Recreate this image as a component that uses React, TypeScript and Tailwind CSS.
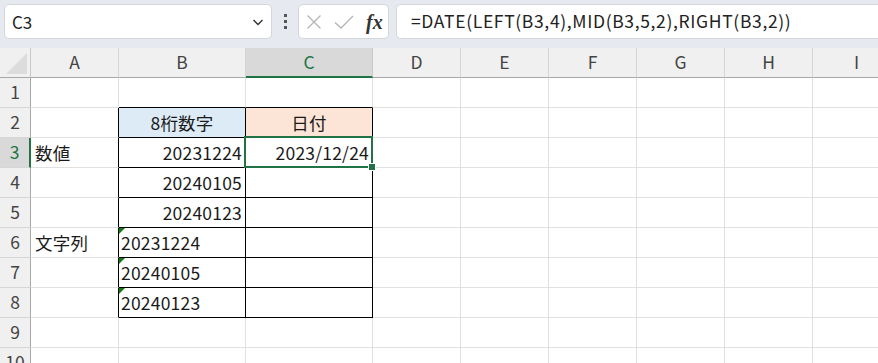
import React from "react";

const FONT = { fontFamily: '"Noto Sans CJK JP", "Noto Sans", sans-serif' };

const COLS = ["A", "B", "C", "D", "E", "F", "G", "H", "I"];

type CellDef = { text?: string; align?: "left" | "right" | "center"; tri?: boolean };

const data: Record<string, CellDef> = {
  B2: { text: "8桁数字", align: "center" },
  C2: { text: "日付", align: "center" },
  A3: { text: "数値", align: "left" },
  B3: { text: "20231224", align: "right" },
  C3: { text: "2023/12/24", align: "right" },
  B4: { text: "20240105", align: "right" },
  B5: { text: "20240123", align: "right" },
  A6: { text: "文字列", align: "left" },
  B6: { text: "20231224", align: "left", tri: true },
  B7: { text: "20240105", align: "left", tri: true },
  B8: { text: "20240123", align: "left", tri: true },
};

function cellClass(col: string, row: number): string {
  const inTable = (col === "B" || col === "C") && row >= 2 && row <= 8;
  let cls = "relative flex items-center h-[30px] border-r border-b ";
  if (inTable) {
    cls += "border-r-black border-b-black ";
  } else if (col === "A" && row >= 2 && row <= 8) {
    cls += "border-r-black border-b-[#e1e1e1] ";
  } else if ((col === "B" || col === "C") && row === 1) {
    cls += "border-r-[#e1e1e1] border-b-black ";
  } else {
    cls += "border-r-[#e1e1e1] border-b-[#e1e1e1] ";
  }
  if (col === "B" && row === 2) cls += "bg-[#ddebf7] ";
  else if (col === "C" && row === 2) cls += "bg-[#fce4d6] ";
  else cls += "bg-white ";
  return cls;
}

function Cell({ col, row }: { col: string; row: number }) {
  const key = `${col}${row}`;
  const d = data[key];
  const selected = key === "C3";
  let justify = "justify-start pl-[4px]";
  if (d?.align === "right") justify = "justify-end pr-[3px]";
  if (d?.align === "center") justify = "justify-center";
  if (d?.tri) justify = "justify-start pl-[2px]";
  return (
    <div className={cellClass(col, row) + justify + (selected ? " z-10" : "")}>
      {d?.tri && (
        <div className="absolute top-0 left-0 w-0 h-0 border-t-[6px] border-r-[6px] border-t-[#107c10] border-r-transparent" />
      )}
      {d?.text && (
        <span className="text-[17.5px] tracking-[0.2px] leading-none text-[#1a1a1a] whitespace-nowrap pt-[1px]">
          {d.text}
        </span>
      )}
      {selected && (
        <>
          <div className="absolute left-[-2px] top-[-2px] right-[-1px] bottom-[-1px] border-2 border-[#217346] pointer-events-none" />
          <div className="absolute right-[-4px] bottom-[-4px] w-[6px] h-[6px] bg-[#217346] border border-white box-content" />
        </>
      )}
    </div>
  );
}

export default function App() {
  const rows = [1, 2, 3, 4, 5, 6, 7, 8, 9, 10];
  return (
    <div className="w-[878px] h-[363px] overflow-hidden bg-white" style={FONT}>
      {/* Formula bar area */}
      <div className="h-[48px] bg-[#e6e9ef] flex items-start pt-[4px] pl-[4px]">
        <div className="w-[268px] h-[35px] bg-white rounded-[5px] border border-[#d4d6da] flex items-center pl-[7px] pr-[6px]">
          <span className="text-[17px] text-[#222] flex-1">C3</span>
          <svg width="14" height="14" viewBox="0 0 14 14" fill="none" stroke="#333" strokeWidth="1.4">
            <path d="M2.5 5 L7 9.5 L11.5 5" />
          </svg>
        </div>
        <div className="w-[26px] h-[35px] flex flex-col items-center justify-center gap-[3px]">
          <div className="w-[3px] h-[3px] bg-[#555]" />
          <div className="w-[3px] h-[3px] bg-[#555]" />
          <div className="w-[3px] h-[3px] bg-[#555]" />
        </div>
        <div className="w-[91px] h-[35px] bg-white rounded-[5px] border border-[#d4d6da] flex items-center pl-[7px] gap-[12px]">
          <svg width="16" height="16" viewBox="0 0 16 16" fill="none" stroke="#b5b5b5" strokeWidth="1.3">
            <path d="M1.5 1.5 L14.5 14.5 M14.5 1.5 L1.5 14.5" />
          </svg>
          <svg width="20" height="16" viewBox="0 0 20 16" fill="none" stroke="#b5b5b5" strokeWidth="1.3">
            <path d="M1 8.5 L7 14 L19 2" />
          </svg>
          <span
            className="text-[20px] italic font-bold text-[#333] leading-none"
            style={{ fontFamily: '"Liberation Serif", "DejaVu Serif", serif' }}
          >
            fx
          </span>
        </div>
        <div className="ml-[7px] flex-1 h-[35px] bg-white rounded-l-[5px] border border-r-0 border-[#d4d6da] flex items-center pl-[14px]">
          <span className="text-[17.5px] tracking-[0.65px] text-[#222] whitespace-nowrap">
            =DATE(LEFT(B3,4),MID(B3,5,2),RIGHT(B3,2))
          </span>
        </div>
      </div>

      {/* Grid */}
      <div className="grid grid-cols-[31px_88px_127px_127px_88px_88px_88px_88px_88px_88px] w-[1000px]">
        {/* header row */}
        <div className="h-[30px] bg-[#f0f0f0] border-r border-b border-r-[#c8c8c8] border-b-[#a8a8a8] flex items-end justify-end p-[3px]">
          <div className="w-0 h-0 border-b-[21px] border-l-[21px] border-b-[#dcdcdc] border-l-transparent" />
        </div>
        {COLS.map((c) =>
          c === "C" ? (
            <div
              key={c}
              className="h-[30px] bg-[#d9d9d9] border-r border-r-[#c8c8c8] border-b-2 border-b-[#217346] flex items-center justify-center text-[17.5px] text-[#217346]"
            >
              {c}
            </div>
          ) : (
            <div
              key={c}
              className="h-[30px] bg-[#f0f0f0] border-r border-b border-r-[#d6d6d6] border-b-[#a8a8a8] flex items-center justify-center text-[17.5px] text-[#444]"
            >
              {c}
            </div>
          )
        )}
        {rows.map((r) => (
          <React.Fragment key={r}>
            {r === 3 ? (
              <div className="h-[30px] bg-[#d9d9d9] border-r-2 border-r-[#217346] border-b border-b-[#d6d6d6] flex items-center justify-center text-[17.5px] text-[#217346]">
                {r}
              </div>
            ) : (
              <div className="h-[30px] bg-[#f0f0f0] border-r border-b border-r-[#a8a8a8] border-b-[#d6d6d6] flex items-center justify-center text-[17.5px] text-[#444]">
                {r}
              </div>
            )}
            {COLS.map((c) => (
              <Cell key={c + r} col={c} row={r} />
            ))}
          </React.Fragment>
        ))}
      </div>
    </div>
  );
}
